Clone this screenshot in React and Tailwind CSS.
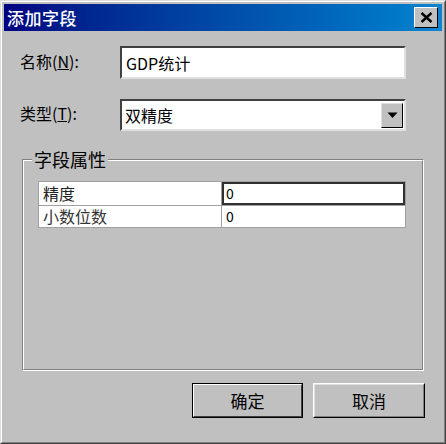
export default function App() {
  const font = { fontFamily: '"Noto Sans CJK SC", "Liberation Sans", sans-serif' };
  return (
    <div className="w-[446px] h-[444px] bg-[#c0c0c0] text-black" style={font}>
      <div className="w-full h-full border border-t-[#dfdfdf] border-l-[#dfdfdf] border-r-[#404040] border-b-[#404040]">
        <div className="w-full h-full border border-t-white border-l-white border-r-[#808080] border-b-[#808080] p-[2px] flex flex-col">
          {/* Title bar */}
          <div className="h-[27px] flex items-center justify-between pl-[3px] pr-[4px] bg-gradient-to-r from-[#000080] to-[#1084d0]">
            <span className="text-white text-[17px] leading-none font-medium tracking-[0.5px]">添加字段</span>
            <div className="w-[24px] h-[21px] bg-[#c0c0c0] border border-t-white border-l-white border-r-black border-b-black flex items-center justify-center">
              <svg width="13" height="11" viewBox="0 0 13 11">
                <path d="M1.5 1 L11.5 10 M11.5 1 L1.5 10" stroke="black" strokeWidth="2.4" />
              </svg>
            </div>
          </div>
          {/* Content */}
          <div className="flex-1 flex flex-col pl-[16px] pr-[16px]">
            <div className="flex items-center mt-[15px]">
              <div className="w-[100px] text-[16px] leading-none -mt-[4px]">
                名称(<span className="underline">N</span>):
              </div>
              <div className="w-[286px] h-[33px] bg-white border-2 border-t-[#404040] border-l-[#404040] border-r-[#dfdfdf] border-b-[#dfdfdf] flex items-center pl-[4px] text-[16px]">
                GDP统计
              </div>
            </div>
            <div className="flex items-center mt-[20px]">
              <div className="w-[100px] text-[16px] leading-none -mt-[4px]">
                类型(<span className="underline">T</span>):
              </div>
              <div className="w-[286px] h-[32px] bg-white border-2 border-t-[#404040] border-l-[#404040] border-r-[#dfdfdf] border-b-[#dfdfdf] flex items-center justify-between pl-[3px] pr-[1px] text-[16px]">
                <span>双精度</span>
                <div className="w-[22px] h-[25px] bg-[#c0c0c0] border border-t-[#dfdfdf] border-l-[#dfdfdf] border-r-black border-b-black flex items-center justify-center">
                  <svg width="11" height="7" viewBox="0 0 11 7">
                    <path d="M0.5 0.5 L10.5 0.5 L5.5 6 Z" fill="black" />
                  </svg>
                </div>
              </div>
            </div>
            {/* Group box */}
            <div className="relative mt-[28px] ml-[2px] mr-[2px] h-[212px] border border-t-[#808080] border-l-[#808080] border-r-white border-b-white">
              <div className="w-full h-full border border-t-white border-l-white border-r-[#808080] border-b-[#808080] pt-[20px] pl-[14px] pr-[16px]">
                <div className="bg-white border border-[#a0a0a0] text-[16px]">
                  <div className="flex h-[23px]">
                    <div className="w-[183px] border-r border-[#a0a0a0] pl-[4px] leading-[22px] text-[#222]">精度</div>
                    <div className="flex-1 border-2 border-[#303030] pl-[2px] leading-[18px] text-[14px]">0</div>
                  </div>
                  <div className="flex h-[22px] border-t border-[#a0a0a0]">
                    <div className="w-[183px] border-r border-[#a0a0a0] pl-[4px] leading-[20px] text-[#333]">小数位数</div>
                    <div className="flex-1 pl-[4px] leading-[20px] text-[14px]">0</div>
                  </div>
                </div>
              </div>
              <span className="absolute left-[9px] -top-[14px] bg-[#c0c0c0] px-[2px] text-[18px] leading-[26px]">字段属性</span>
            </div>
            {/* Buttons */}
            <div className="flex justify-end gap-[10px] mt-[12px] mr-[1px]">
              <div className="w-[111px] h-[35px] border border-black">
                <div className="w-full h-full border border-t-white border-l-white border-r-[#404040] border-b-[#404040] flex items-center justify-center text-[17px]">
                  确定
                </div>
              </div>
              <div className="w-[112px] h-[35px] border border-t-white border-l-white border-r-black border-b-black">
                <div className="w-full h-full border border-t-[#dfdfdf] border-l-[#dfdfdf] border-r-[#808080] border-b-[#808080] flex items-center justify-center text-[17px]">
                  取消
                </div>
              </div>
            </div>
          </div>
        </div>
      </div>
    </div>
  );
}
